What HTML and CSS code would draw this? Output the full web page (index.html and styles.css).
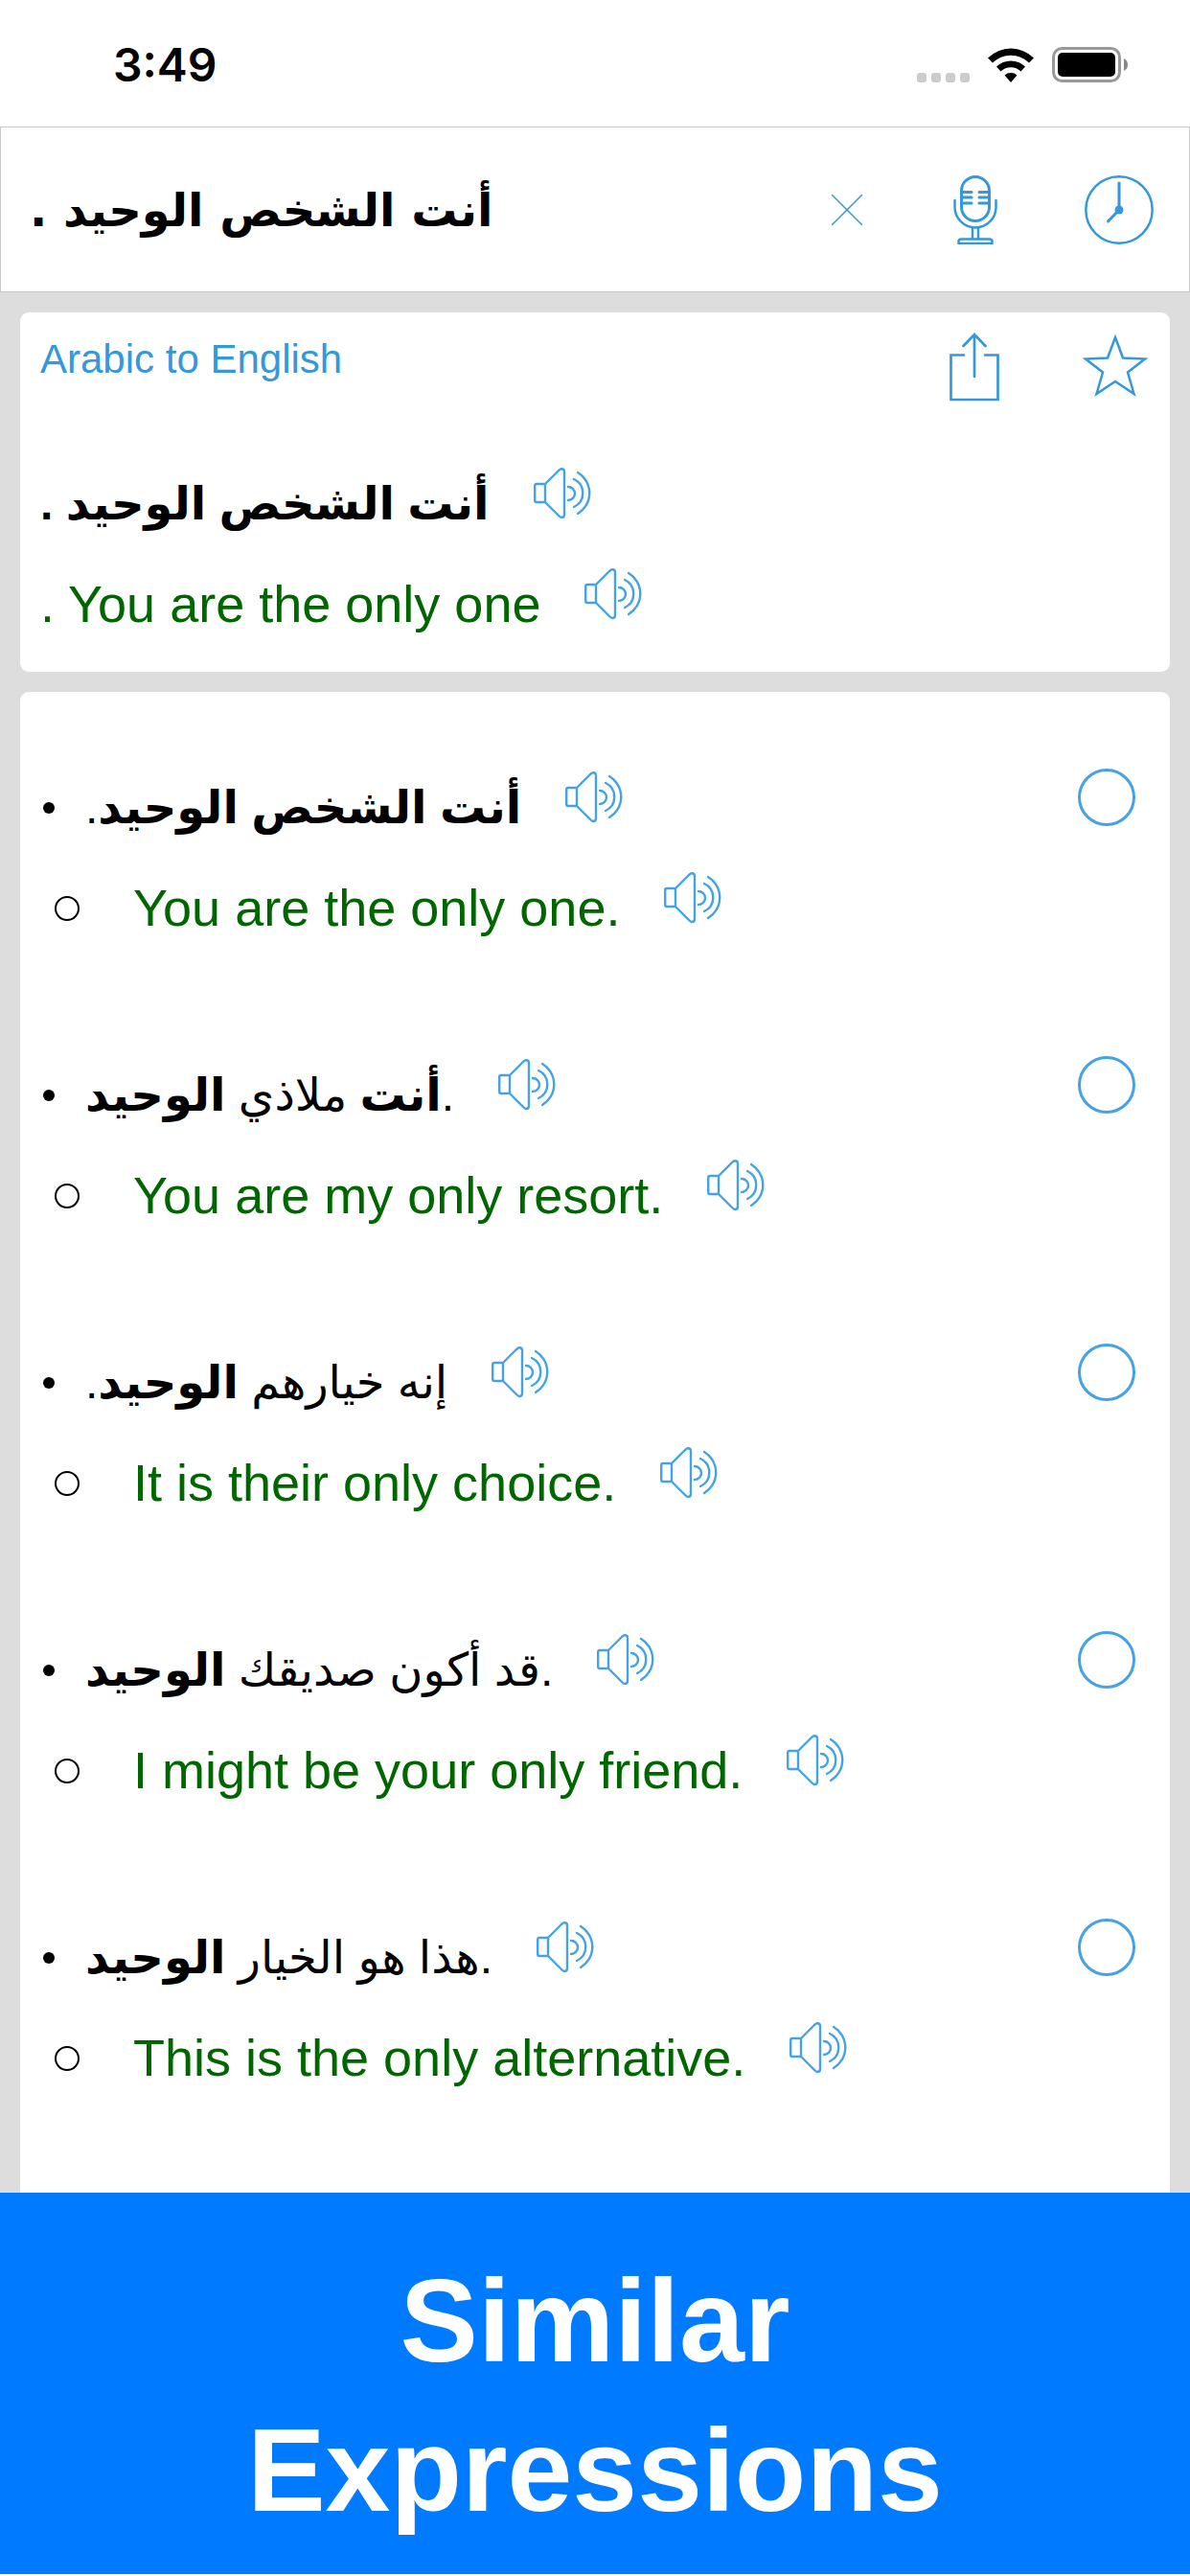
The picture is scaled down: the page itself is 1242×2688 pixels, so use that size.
FILE: index.html
```
<!DOCTYPE html>
<html lang="en">
<head>
    <meta charset="UTF-8">
    <meta name="viewport" content="width=device-width, initial-scale=1.0">
    <title>Arabic to English - Similar Expressions</title>
    <link rel="stylesheet" href="styles.css">
</head>
<body>

<!-- Shared icon -->
<svg class="sprite" aria-hidden="true">
    <symbol id="speaker" viewBox="0 0 60 54" stroke-width="2.400">
        <path d="M12 17H3Q1.200 17 1.200 19V34Q1.200 36 3 36H12M12 17V36M12 17L26 3Q28 1.200 29 1.200Q32 1.200 32 4V49Q32 52 29 52Q28 52 26 50L12 36"/>
        <path d="M36 20A7 7 0 0 1 36 34M42 12A16 16 0 0 1 42 41M46 5A25 25 0 0 1 46 48"/>
    </symbol>
</svg>

<!-- Status Bar -->
<div class="status-bar">
    <span class="time">3:49</span>
    <div class="status-icons">
        <svg width="55" height="36" viewBox="0 0 55 36" fill="#ccc">
            <rect x="0" y="26" width="10" height="10" rx="3"/>
            <rect x="15" y="26" width="10" height="10" rx="3"/>
            <rect x="30" y="26" width="10" height="10" rx="3"/>
            <rect x="45" y="26" width="10" height="10" rx="3"/>
        </svg>
        <svg width="48" height="36" viewBox="0 0 48 36">
            <path d="M0 10.500A34 34 0 0 1 48 10.500L43 15.500A27 27 0 0 0 5 15.500Z"/>
            <path d="M9 19.500A21.500 21.500 0 0 1 39 19.500L34.500 24.500A15 15 0 0 0 13.500 24.500Z"/>
            <path d="M17.500 28.500A10 10 0 0 1 30.500 28.500L24 36Z"/>
        </svg>
        <svg width="80" height="37" viewBox="0 0 80 37">
            <rect x="1.500" y="1.500" width="69" height="34" rx="9" fill="none" stroke="#999" stroke-width="3"/>
            <rect x="6" y="6" width="60" height="25" rx="5"/>
            <path d="M75 12Q79 14 79 18.500Q79 23 75 25Z" fill="#888"/>
        </svg>
    </div>
</div>

<!-- Search Bar -->
<header class="search-bar">
    <input type="text" class="search-input" dir="rtl" lang="ar" aria-label="Search" value="أنت الشخص الوحيد .">
    <button type="button" class="icon-btn" aria-label="Clear">
        <svg width="40" height="72" viewBox="0 0 40 72" stroke-width="1.500">
            <path d="M4.500 20.500L35.500 51.500M35.500 20.500L4.500 51.500"/>
        </svg>
    </button>
    <button type="button" class="icon-btn" aria-label="Speak">
        <svg width="72" height="72" viewBox="0 0 72 72" stroke-width="3">
            <rect x="21.500" y="1.500" width="29" height="46" rx="14.500"/>
            <path d="M22 17.500H32M22 23H32M22 29H32M40 17.500H50M40 23H50M40 29H50"/>
            <path d="M14.500 26V33A21.500 21.500 0 0 0 57.500 33V26" stroke-width="2.500"/>
            <path d="M33 55V66M39 55V66M18.500 71V69Q18.500 66.500 21.500 66.500H50.500Q53.500 66.500 53.500 69V71Z" stroke-width="2.500"/>
        </svg>
    </button>
    <button type="button" class="icon-btn" aria-label="History">
        <svg width="72" height="72" viewBox="0 0 72 72" stroke-width="2.500">
            <circle cx="36" cy="36" r="34.700"/>
            <path d="M36 36V8M36 36L24.500 48" stroke-width="3"/>
            <circle cx="36" cy="36" r="4.500" fill="#3498db" stroke="none"/>
        </svg>
    </button>
</header>

<main>
    <!-- Translation -->
    <section class="card">
        <div class="card-header">
            <h2>Arabic to English</h2>
            <button type="button" class="icon-btn" aria-label="Share">
                <svg width="72" height="72" viewBox="0 0 72 72" stroke-width="2.700">
                    <path d="M25 23.500H11.500V70H60.500V23.500H47M36 46V2M24.500 14L36 2L47.500 14"/>
                </svg>
            </button>
            <button type="button" class="icon-btn" aria-label="Favorite">
                <svg width="72" height="72" viewBox="0 0 72 72" stroke-width="2.500" stroke-linejoin="miter">
                    <path d="M36 5L44 26.500L67 27.500L49 41.500L55.500 64L36 51L16.500 64L23 41.500L5 27.500L28 26.500Z"/>
                </svg>
            </button>
        </div>
        <div class="line">
            <span class="arabic" dir="rtl" lang="ar"><b>أنت الشخص الوحيد .</b></span>
            <button type="button" class="speak-btn" aria-label="Listen"><svg><use href="#speaker"/></svg></button>
        </div>
        <div class="line">
            <span class="english">. You are the only one</span>
            <button type="button" class="speak-btn" aria-label="Listen"><svg><use href="#speaker"/></svg></button>
        </div>
    </section>

    <!-- Similar Expressions -->
    <ul class="card expressions">
        <li>
            <div class="line source">
                <span class="arabic" dir="rtl" lang="ar"><b>أنت الشخص الوحيد</b>.</span>
                <button type="button" class="speak-btn" aria-label="Listen"><svg><use href="#speaker"/></svg></button>
                <input type="radio" name="expression" aria-label="You are the only one.">
            </div>
            <div class="line target">
                <span class="english">You are the only one.</span>
                <button type="button" class="speak-btn" aria-label="Listen"><svg><use href="#speaker"/></svg></button>
            </div>
        </li>
        <li>
            <div class="line source">
                <span class="arabic" dir="ltr" lang="ar"><b>أنت</b> ملاذي <b>الوحيد</b>.</span>
                <button type="button" class="speak-btn" aria-label="Listen"><svg><use href="#speaker"/></svg></button>
                <input type="radio" name="expression" aria-label="You are my only resort.">
            </div>
            <div class="line target">
                <span class="english">You are my only resort.</span>
                <button type="button" class="speak-btn" aria-label="Listen"><svg><use href="#speaker"/></svg></button>
            </div>
        </li>
        <li>
            <div class="line source">
                <span class="arabic" dir="rtl" lang="ar">إنه خيارهم <b>الوحيد</b>.</span>
                <button type="button" class="speak-btn" aria-label="Listen"><svg><use href="#speaker"/></svg></button>
                <input type="radio" name="expression" aria-label="It is their only choice.">
            </div>
            <div class="line target">
                <span class="english">It is their only choice.</span>
                <button type="button" class="speak-btn" aria-label="Listen"><svg><use href="#speaker"/></svg></button>
            </div>
        </li>
        <li>
            <div class="line source">
                <span class="arabic" dir="ltr" lang="ar">قد أكون صديقك <b>الوحيد</b>.</span>
                <button type="button" class="speak-btn" aria-label="Listen"><svg><use href="#speaker"/></svg></button>
                <input type="radio" name="expression" aria-label="I might be your only friend.">
            </div>
            <div class="line target">
                <span class="english">I might be your only friend.</span>
                <button type="button" class="speak-btn" aria-label="Listen"><svg><use href="#speaker"/></svg></button>
            </div>
        </li>
        <li>
            <div class="line source">
                <span class="arabic" dir="ltr" lang="ar">هذا هو الخيار <b>الوحيد</b>.</span>
                <button type="button" class="speak-btn" aria-label="Listen"><svg><use href="#speaker"/></svg></button>
                <input type="radio" name="expression" aria-label="This is the only alternative.">
            </div>
            <div class="line target">
                <span class="english">This is the only alternative.</span>
                <button type="button" class="speak-btn" aria-label="Listen"><svg><use href="#speaker"/></svg></button>
            </div>
        </li>
    </ul>
</main>

<!-- Banner -->
<footer>
    <h1>Similar<br>Expressions</h1>
</footer>

</body>
</html>
```
FILE: styles.css
```
/* General Reset and Fonts */
* {
    box-sizing: border-box;
}

body {
    font-family: "Liberation Sans", "DejaVu Sans", sans-serif;
    background-color: #ddd;
    margin: 0;
    color: #000;
    min-height: 100vh;
    display: flex;
    flex-direction: column;
}

button {
    background: none;
    border: none;
    padding: 0;
    cursor: pointer;
}

svg {
    display: block;
}

.sprite {
    position: absolute;
    width: 0;
    height: 0;
}

/* Status Bar */
.status-bar {
    display: flex;
    justify-content: space-between;
    align-items: center;
    height: 132px;
    padding: 3px 64px 0 118px;
    background-color: #fff;
}

.time {
    font-family: Inter, sans-serif;
    font-size: 48px;
    font-weight: 600;
}

.status-icons {
    display: flex;
    align-items: center;
    gap: 19px;
}

/* Search Bar */
.search-bar {
    display: flex;
    align-items: center;
    gap: 78px;
    height: 173px;
    padding: 0 37px 0 30px;
    background-color: #fff;
    border: 1px solid #c8c8c8;
}

.search-input {
    flex: 1;
    min-width: 0;
    height: 100px;
    padding: 0;
    border: none;
    outline: none;
    background: none;
    font-family: "DejaVu Sans", sans-serif;
    font-size: 48px;
    font-weight: bold;
    line-height: 100px;
    text-align: left;
}

.icon-btn svg {
    fill: none;
    stroke: #3498db;
    stroke-linecap: round;
}

/* Cards */
main {
    flex: 1;
    display: flex;
    flex-direction: column;
    gap: 21px;
    padding: 21px 21px 0;
}

.card {
    margin: 0;
    padding: 0 21px 18px;
    background-color: #fff;
    border-radius: 9px;
}

.card-header {
    display: flex;
    align-items: flex-start;
    gap: 75px;
    height: 147px;
    padding-top: 21px;
}

.card-header h2 {
    flex: 1;
    margin: 0;
    color: #3498db;
    font-size: 42px;
    font-weight: normal;
    line-height: 56px;
}

.line {
    display: flex;
    align-items: center;
    gap: 46px;
    height: 105px;
    line-height: 105px;
}

.arabic {
    font-size: 48px;
    white-space: nowrap;
}

.english {
    font-size: 54px;
    color: #060;
}

.speak-btn {
    margin-bottom: 22px;
}

.speak-btn svg {
    width: 60px;
    height: 54px;
    fill: none;
    stroke: #45a3e5;
    stroke-linecap: round;
}

/* Expression List */
.expressions {
    flex: 1;
    list-style: none;
    border-radius: 9px 9px 0 0;
}

.expressions li {
    padding: 68px 15px 22px 3px;
}

.source::before,
.target::before {
    content: "";
    border-radius: 50%;
}

.source::before {
    width: 12px;
    height: 12px;
    margin-right: -14px;
    background-color: #000;
}

.target::before {
    width: 22px;
    height: 22px;
    margin: 0 10px 0 12px;
    border: 2px solid #000;
}

.source input {
    appearance: none;
    width: 60px;
    height: 60px;
    margin: 0 0 22px auto;
    border: 3px solid #45a3e5;
    border-radius: 50%;
}

.source input:checked {
    background-color: #45a3e5;
}

/* Footer */
footer {
    padding: 56px 20px 30px;
    background-color: #007aff;
    border-bottom: 2px solid #fff;
    text-align: center;
}

footer h1 {
    margin: 0;
    color: #fff;
    font-size: 122px;
    line-height: 156px;
}
```
